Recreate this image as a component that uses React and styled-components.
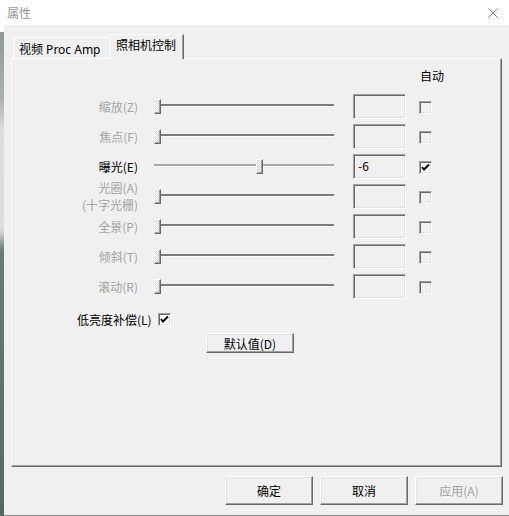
import React from "react";
import styled, { createGlobalStyle } from "styled-components";

const GlobalStyle = createGlobalStyle`
  html, body {
    margin: 0;
    padding: 0;
  }
  body {
    width: 509px;
    height: 516px;
    overflow: hidden;
    background: #f0f0f0;
    font-family: "Noto Sans CJK SC", "Noto Sans", sans-serif;
    font-size: 12px;
  }
`;

const Screen = styled.div`
  display: flex;
  width: 509px;
  height: 516px;
`;

const DesktopEdge = styled.div`
  flex: none;
  width: 4px;
  background: linear-gradient(
    to bottom,
    #ffffff 0 32px,
    #8c9c90 32px,
    #a9b5ab 100px,
    #dadfda 130px,
    #d9dcd9 230px,
    #6a7e70 250px,
    #56695c 516px
  );
`;

const Dialog = styled.div`
  flex: 1;
  display: flex;
  flex-direction: column;
  box-sizing: border-box;
  background: #f0f0f0;
  border-bottom: 1px solid #8a8a8a;
`;

const TitleBar = styled.div`
  flex: none;
  height: 25px;
  display: flex;
  align-items: center;
  justify-content: space-between;
  padding: 0 11px 0 3px;
  background: #ffffff;
`;

const Title = styled.span`
  color: #9a9a9a;
  font-size: 12px;
`;

const Body = styled.div`
  display: flex;
  flex-direction: column;
  padding: 9px 7px 0 7px;
`;

const TabStrip = styled.div`
  position: relative;
  z-index: 1;
  display: flex;
  align-items: flex-end;
  height: 24px;
  padding-left: 2px;
`;

const Tab = styled.div`
  box-sizing: border-box;
  width: ${(p) => p.$width}px;
  height: ${(p) => (p.$active ? 25 : 21)}px;
  margin-bottom: ${(p) => (p.$active ? -1 : 0)}px;
  padding: ${(p) => (p.$active ? "2px 0 0 6px" : "3px 0 0 5px")};
  border-top: 1px solid #ffffff;
  border-left: 1px solid #ffffff;
  border-right: ${(p) => (p.$active ? "1px solid #696969" : "none")};
  box-shadow: ${(p) => (p.$active ? "inset -1px 0 0 #a0a0a0" : "none")};
  background: #f0f0f0;
  color: #000;
  font-family: "Noto Sans", "Noto Sans CJK SC", sans-serif;
  font-size: 12px;
  line-height: 18px;
  white-space: nowrap;
`;

const Panel = styled.div`
  box-sizing: border-box;
  height: 409px;
  border-top: 1px solid #ffffff;
  border-left: 1px solid #ffffff;
  border-right: 1px solid #696969;
  border-bottom: 1px solid #696969;
  box-shadow: inset -1px -1px 0 #a0a0a0;
`;

const HeaderRow = styled.div`
  display: flex;
  align-items: center;
  height: 32px;
  padding-left: 408px;
  color: #000;
`;

const ControlRow = styled.div`
  display: flex;
  align-items: center;
  height: 30px;
`;

const Label = styled.div`
  width: 126px;
  text-align: right;
  line-height: 17px;
  color: ${(p) => (p.$disabled ? "#a3a3a3" : "#000")};
  white-space: nowrap;

  span {
    display: block;
  }
`;

const SliderTrack = styled.div`
  position: relative;
  flex: none;
  width: 180px;
  height: 15px;
  margin-left: 16px;
`;

const Groove = styled.div`
  box-sizing: border-box;
  height: 3px;
  margin-top: 5px;
  background: ${(p) => (p.$disabled ? "#7c7c7c" : "#a8a8a8")};
  border-bottom: 1px solid #ffffff;
`;

const Thumb = styled.div`
  position: absolute;
  top: 0;
  box-sizing: border-box;
  width: 7px;
  height: 15px;
  border: 1px solid;
  border-color: #ffffff #696969 #696969 #ffffff;
  box-shadow: inset -1px -1px 0 #a0a0a0;
  background: repeating-conic-gradient(#ffffff 0 25%, #d6d6d6 0 50%) 0 0 / 2px 2px;
`;

const EditBox = styled.div`
  flex: none;
  box-sizing: border-box;
  width: 53px;
  height: 25px;
  margin-left: 19px;
  padding-left: 4px;
  border: 1px solid;
  border-color: #a0a0a0 #ffffff #ffffff #a0a0a0;
  box-shadow: inset 1px 1px 0 #696969, inset -1px -1px 0 #e3e3e3;
  background: #f0f0f0;
  color: #000;
  line-height: 22px;
`;

const CheckBox = styled.div`
  flex: none;
  box-sizing: border-box;
  width: 13px;
  height: 13px;
  margin-left: ${(p) => p.$offset ?? 13}px;
  margin-top: ${(p) => p.$drop ?? 0}px;
  border: 1px solid;
  border-color: #a0a0a0 #ffffff #ffffff #a0a0a0;
  box-shadow: inset 1px 1px 0 #696969, inset -1px -1px 0 #e3e3e3;
  background: ${(p) => (p.$checked ? "#ffffff" : "#f0f0f0")};

  svg {
    display: block;
  }
`;

const CompensationRow = styled.div`
  display: flex;
  align-items: center;
  height: 16px;
  margin-top: 10px;
  padding-left: 65px;
  color: #000;
`;

const RaisedButton = styled.button`
  box-sizing: border-box;
  width: 88px;
  height: ${(p) => p.$height}px;
  padding: 0;
  border: 1px solid;
  border-color: #ffffff #696969 #696969 #ffffff;
  box-shadow: inset -1px -1px 0 #a0a0a0, inset 1px 1px 0 #e3e3e3;
  background: #f0f0f0;
  color: ${(p) => (p.disabled ? "#a0a0a0" : "#000")};
  font-family: inherit;
  font-size: 12px;
`;

const DefaultButton = styled(RaisedButton)`
  display: block;
  margin: 6px 0 0 194px;
`;

const Footer = styled.div`
  display: flex;
  justify-content: flex-end;
  gap: 7px;
  margin: 9px -1px 0 0;
`;

const controls = [
  { label: ["缩放(Z)"], pos: 0, disabled: true },
  { label: ["焦点(F)"], pos: 0, disabled: true },
  { label: ["曝光(E)"], pos: 0.59, value: "-6", auto: true },
  { label: ["光圈(A)", "(十字光栅)"], pos: 0, disabled: true },
  { label: ["全景(P)"], pos: 0, disabled: true },
  { label: ["倾斜(T)"], pos: 0, disabled: true },
  { label: ["滚动(R)"], pos: 0, disabled: true },
];

const Check = () => (
  <svg width="11" height="11" viewBox="0 0 11 11">
    <polyline
      points="2,5 4,7.5 9,2.5"
      fill="none"
      stroke="#000"
      strokeWidth="2"
    />
  </svg>
);

const CloseIcon = () => (
  <svg width="10" height="10" viewBox="0 0 10 10">
    <path d="M0.5 0.5 L9.5 9.5 M9.5 0.5 L0.5 9.5" stroke="#8a8a8a" strokeWidth="1" />
  </svg>
);

const Slider = ({ pos, disabled }) => (
  <SliderTrack>
    <Groove $disabled={disabled} />
    <Thumb style={{ left: `${pos * (180 - 7)}px` }} />
  </SliderTrack>
);

export default function App() {
  return (
    <>
      <GlobalStyle />
      <Screen>
        <DesktopEdge />
        <Dialog>
          <TitleBar>
            <Title>属性</Title>
            <CloseIcon />
          </TitleBar>
          <Body>
            <TabStrip>
              <Tab $width={96}>视频 Proc Amp</Tab>
              <Tab $width={75} $active>
                照相机控制
              </Tab>
            </TabStrip>
            <Panel>
              <HeaderRow>自动</HeaderRow>
              {controls.map((c) => (
                <ControlRow key={c.label[0]}>
                  <Label $disabled={c.disabled}>
                    {c.label.map((line) => (
                      <span key={line}>{line}</span>
                    ))}
                  </Label>
                  <Slider pos={c.pos} disabled={c.disabled} />
                  <EditBox>{c.value}</EditBox>
                  <CheckBox $checked={c.auto} $drop={3}>
                    {c.auto && <Check />}
                  </CheckBox>
                </ControlRow>
              ))}
              <CompensationRow>
                低亮度补偿(L)
                <CheckBox $checked $offset={6}>
                  <Check />
                </CheckBox>
              </CompensationRow>
              <DefaultButton $height={20}>默认值(D)</DefaultButton>
            </Panel>
            <Footer>
              <RaisedButton $height={29}>确定</RaisedButton>
              <RaisedButton $height={29}>取消</RaisedButton>
              <RaisedButton $height={29} disabled>
                应用(A)
              </RaisedButton>
            </Footer>
          </Body>
        </Dialog>
      </Screen>
    </>
  );
}
